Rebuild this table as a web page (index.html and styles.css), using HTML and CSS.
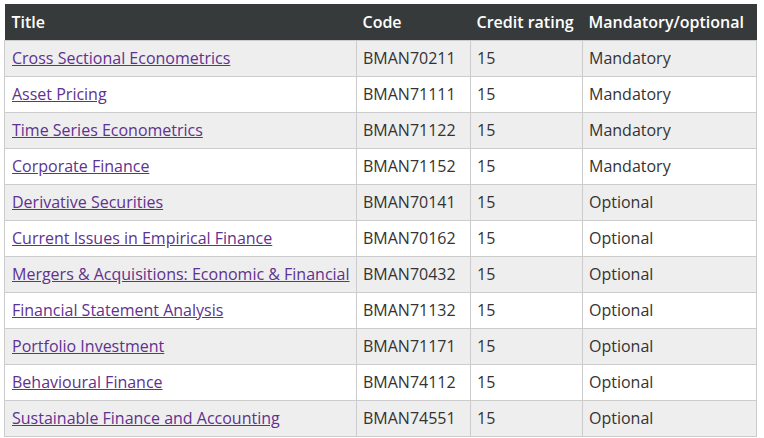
FILE: index.html
```html
<!DOCTYPE html>
<html>
<head>
<meta charset="utf-8">
<link rel="stylesheet" href="styles.css">
</head>
<body>
<table class="units">
<colgroup>
<col class="c1"><col class="c2"><col class="c3"><col class="c4">
</colgroup>
<thead>
<tr><th>Title</th><th>Code</th><th>Credit rating</th><th>Mandatory/optional</th></tr>
</thead>
<tbody>
<tr><td><a href="#">Cross Sectional Econometrics</a></td><td>BMAN70211</td><td>15</td><td>Mandatory</td></tr>
<tr><td><a href="#">Asset Pricing</a></td><td>BMAN71111</td><td>15</td><td>Mandatory</td></tr>
<tr><td><a href="#">Time Series Econometrics</a></td><td>BMAN71122</td><td>15</td><td>Mandatory</td></tr>
<tr><td><a href="#">Corporate Finance</a></td><td>BMAN71152</td><td>15</td><td>Mandatory</td></tr>
<tr><td><a href="#">Derivative Securities</a></td><td>BMAN70141</td><td>15</td><td>Optional</td></tr>
<tr><td><a href="#">Current Issues in Empirical Finance</a></td><td>BMAN70162</td><td>15</td><td>Optional</td></tr>
<tr><td><a href="#">Mergers &amp; Acquisitions: Economic &amp; Financial</a></td><td>BMAN70432</td><td>15</td><td>Optional</td></tr>
<tr><td><a href="#">Financial Statement Analysis</a></td><td>BMAN71132</td><td>15</td><td>Optional</td></tr>
<tr><td><a href="#">Portfolio Investment</a></td><td>BMAN71171</td><td>15</td><td>Optional</td></tr>
<tr><td><a href="#">Behavioural Finance</a></td><td>BMAN74112</td><td>15</td><td>Optional</td></tr>
<tr><td><a href="#">Sustainable Finance and Accounting</a></td><td>BMAN74551</td><td>15</td><td>Optional</td></tr>
</tbody>
</table>
</body>
</html>
```
FILE: styles.css
```css
html, body {
  background: #fff;
}
body {
  margin: 4px;
  font-family: "Open Sans", "Noto Sans", sans-serif;
  font-size: 16px;
  color: #333;
}
.units {
  border-collapse: collapse;
  table-layout: fixed;
  width: 752px;
}
.c1 { width: 352px; }
.c2 { width: 114px; }
.c3 { width: 112px; }
.c4 { width: 174px; }
.units th {
  background: #373a3a;
  color: #fff;
  font-weight: 600;
  text-align: left;
  height: 36px;
  padding: 0 6px;
  border: 0;
  box-sizing: border-box;
  white-space: nowrap;
}
.units td {
  border: 1px solid #ccc;
  height: 36px;
  padding: 0 6px;
  box-sizing: border-box;
  white-space: nowrap;
}
.units th:first-child,
.units td:first-child {
  padding-left: 7px;
}
.units tbody tr:nth-child(odd) td {
  background: #eee;
}
.units a {
  color: #5f3190;
  text-decoration: underline;
}
```
